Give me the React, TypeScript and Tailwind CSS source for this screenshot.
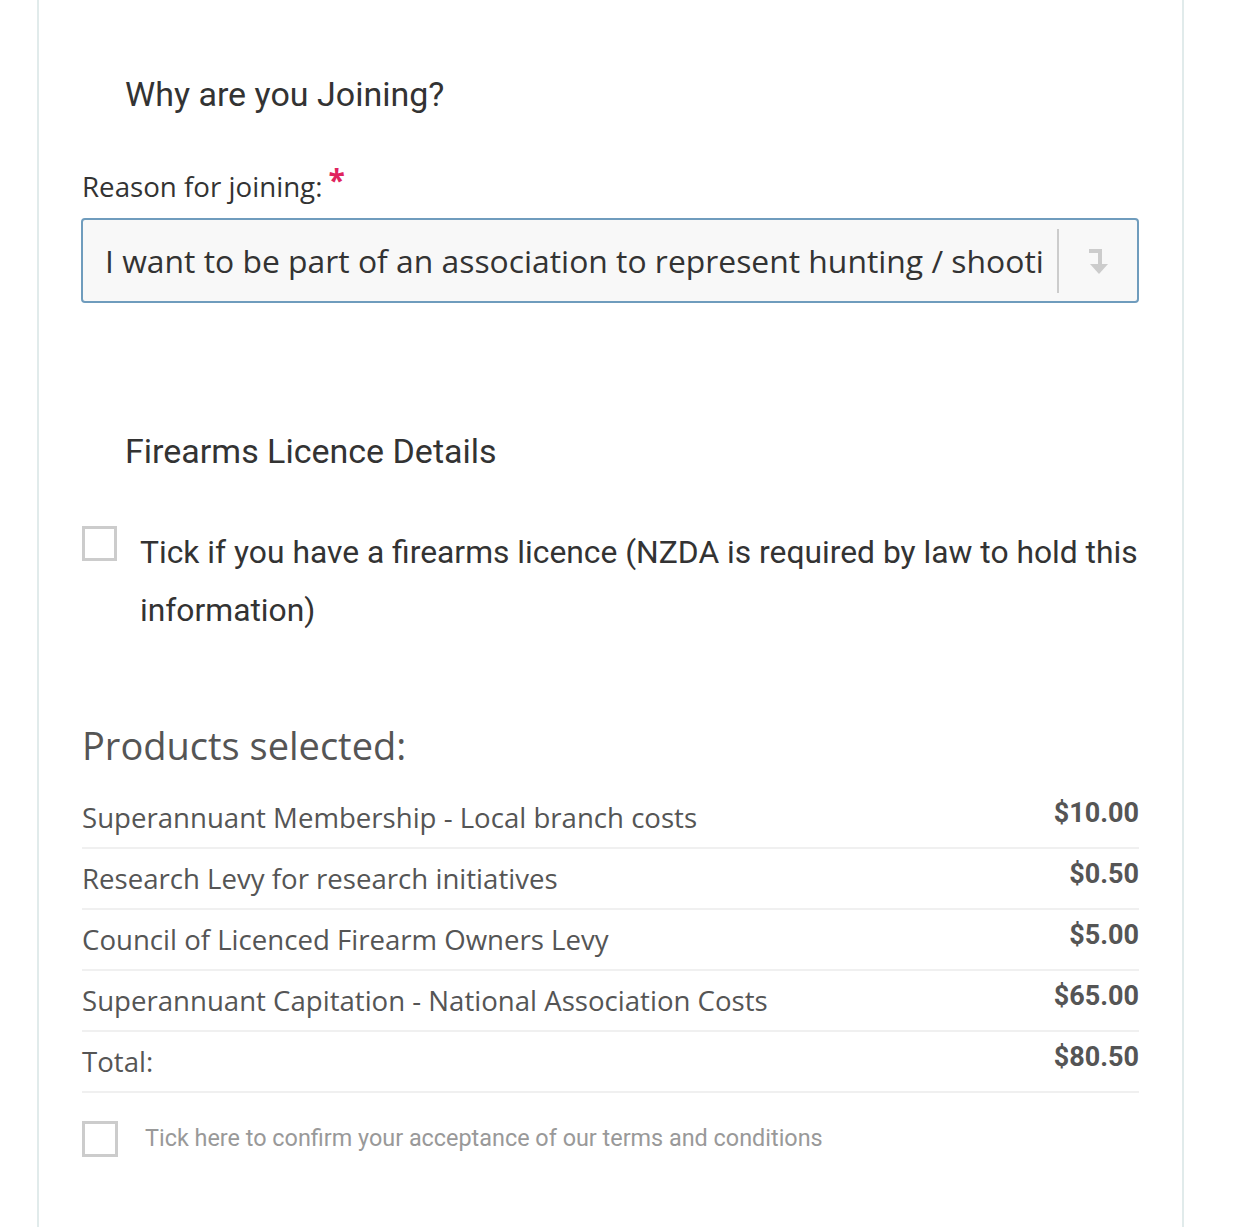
import React from "react";

const rows = [
  { name: "Superannuant Membership - Local branch costs", price: "$10.00" },
  { name: "Research Levy for research initiatives", price: "$0.50" },
  { name: "Council of Licenced Firearm Owners Levy", price: "$5.00" },
  { name: "Superannuant Capitation - National Association Costs", price: "$65.00" },
  { name: "Total:", price: "$80.50" },
];

export default function App() {
  return (
    <div className="min-h-[1227px] w-[1235px] bg-white">
      <div className="ml-[37px] w-[1147px] min-h-[1227px] border-x-2 border-[#e1ebeb] px-[43px]">
        <h2
          className="pt-[74px] pl-[43px] text-[34px] leading-[40px] text-[#333333]"
          style={{ fontFamily: "Roboto, sans-serif" }}
        >
          Why are you Joining?
        </h2>
        <div
          className="mt-[53px] flex items-start text-[27.7px] leading-[38px] text-[#333333]"
          style={{ fontFamily: "'Open Sans', sans-serif" }}
        >
          <span>Reason for joining:</span>
          <span className="ml-[6px] -mt-[6px] text-[30px] font-bold text-[#e0245e]">*</span>
        </div>
        <div
          className="-ml-[1px] mt-[13px] flex h-[85px] items-center rounded-[4px] border-2 border-[#6f9cbd] bg-[#f8f8f8]"
          style={{ fontFamily: "'Open Sans', sans-serif" }}
        >
          <div className="min-w-0 flex-1 overflow-hidden whitespace-nowrap pl-[22px] text-[31.85px] text-[#333333]">
            I want to be part of an association to represent hunting / shooti
          </div>
          <div className="h-[64px] w-[2px] bg-[#cccccc]" />
          <div className="flex w-[78px] items-center justify-center">
            <svg width="20" height="28" viewBox="0 0 20 28">
              <path d="M1 4 H12 V18" fill="none" stroke="#cccccc" strokeWidth="4" />
              <path d="M2 17 H20 L11 27 Z" fill="#cccccc" />
            </svg>
          </div>
        </div>

        <h2
          className="mt-[128px] pl-[43px] text-[34px] leading-[40px] text-[#333333]"
          style={{ fontFamily: "Roboto, sans-serif" }}
        >
          Firearms Licence Details
        </h2>

        <div className="mt-[54px] flex items-start" style={{ fontFamily: "Roboto, sans-serif" }}>
          <div className="mt-[1px] h-[35px] w-[35px] shrink-0 border-[3px] border-[#cccccc] bg-white" />
          <div className="ml-[23px] -mt-[2px] text-[31.8px] leading-[58px] text-[#333333]">
            Tick if you have a firearms licence (NZDA is required by law to hold this information)
          </div>
        </div>

        <h3
          className="mt-[81px] text-[38px] leading-[50px] text-[#555555]"
          style={{ fontFamily: "'Open Sans', sans-serif" }}
        >
          Products selected:
        </h3>

        <div className="mt-[18px]">
          {rows.map((r) => (
            <div key={r.name} className="flex h-[61px] items-center justify-between border-b-2 border-[#f0f0f0]">
              <span
                className="text-[27.6px] text-[#555555]"
                style={{ fontFamily: "'Open Sans', sans-serif" }}
              >
                {r.name}
              </span>
              <span
                className="-mt-[8px] text-[27px] font-bold text-[#555555]"
                style={{ fontFamily: "Roboto, sans-serif" }}
              >
                {r.price}
              </span>
            </div>
          ))}
        </div>

        <div className="mt-[28px] flex items-center" style={{ fontFamily: "Roboto, sans-serif" }}>
          <div className="h-[36px] w-[36px] shrink-0 border-[3px] border-[#cccccc] bg-white" />
          <span className="ml-[27px] whitespace-nowrap text-[23.4px] text-[#999999]">
            Tick here to confirm your acceptance of our terms and conditions
          </span>
        </div>
      </div>
    </div>
  );
}
